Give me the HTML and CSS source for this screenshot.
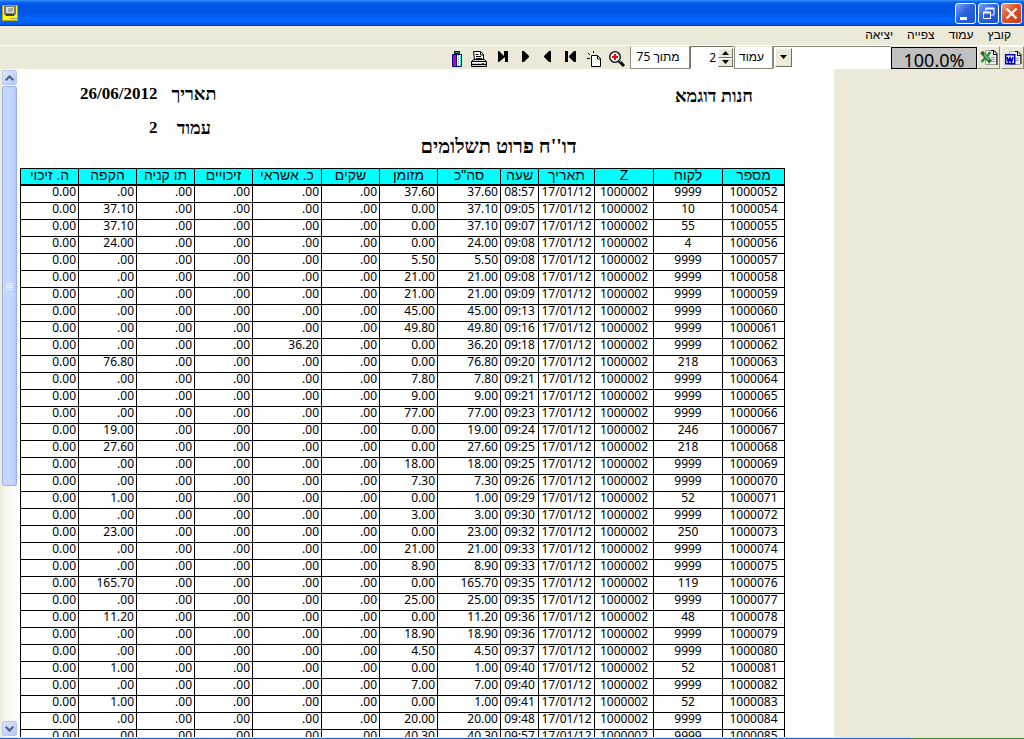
FILE: index.html
```html
<!DOCTYPE html>
<html lang="he" dir="rtl">
<head>
<meta charset="utf-8">
<title>דו''ח פרוט תשלומים</title>
<link rel="stylesheet" href="styles.css">
</head>
<body>
<div class="window">
  <header class="titlebar">
    <div class="window-buttons">
      <button class="win-btn win-close" aria-label="סגור"><svg width="19" height="19" viewBox="0 0 19 19"><path d="M4.500 4.500l10 10M14.500 4.500l-10 10" stroke="#fff" stroke-width="2.300"/></svg></button>
      <button class="win-btn" aria-label="שחזר"><svg width="19" height="19" viewBox="0 0 19 19" fill="none" stroke="#fff"><path d="M7 7V4.500h8V11h-3"/><path d="M6.500 4.500h9" stroke-width="2"/><path d="M4.500 8.500h7v6h-7z"/><path d="M4 8.500h8" stroke-width="2"/></svg></button>
      <button class="win-btn" aria-label="מזער"><svg width="19" height="19" viewBox="0 0 19 19"><path d="M4 13h7v3H4z" fill="#fff"/></svg></button>
    </div>
    <svg class="app-icon" width="16" height="16" viewBox="0 0 16 16"><path fill="#ff0" stroke="#b8a800" d="M.5.5h15v15H.5z"/><path fill="#777" d="M2 1h12v8l-2 2H4L2 9z"/><path fill="#ddd" d="M4 2h8v6H4z"/><path fill="#9bb8b0" d="M6 3h4v4H6z"/><path fill="#c96" d="M9 3h2v3H9z"/><path fill="#444" d="M4 9h8v2H4z"/><path fill="#998" d="M8 13h7v1H8z"/></svg>
  </header>
  <nav class="menubar">
    <button>קובץ</button><button>עמוד</button><button>צפייה</button><button>יציאה</button>
  </nav>
  <div class="toolbar">
    <div class="exports">
      <button class="export-btn" aria-label="Word"><svg width="18" height="18" viewBox="0 0 18 18"><path fill="#eee" stroke="#aaa" d="M5.500 2.500h8l3 3v10h-11z"/><path fill="none" stroke="#000" d="M11 2.500h3l3 3V15M13.500 3v3.500H17"/><path stroke="#999" d="M7 15.500h8M11 9.500h4M11 11.500h4"/><path fill="#fff" stroke="#0000b0" stroke-width="1.500" d="M1.700 5.700h9v9h-9z"/><path fill="none" stroke="#0000d0" stroke-width="1.800" d="M3 8l1.500 5L6 9l1.500 4L9 8"/></svg></button>
      <button class="export-btn" aria-label="Excel"><svg width="18" height="18" viewBox="0 0 18 18"><path fill="#eee" stroke="#999" d="M5.500 1.500h8l3 3v11h-11z"/><path fill="none" stroke="#000" d="M11 1.500h3l3 3V16M13.500 2v3.500H17"/><path stroke="#999" d="M7 15.500h8M11 8.500h4M11 10.500h4M11 12.500h4M9 3v12"/><path stroke="#176b20" stroke-width="3.500" d="M1.500 3l9 10"/><path stroke="#2f8a32" stroke-width="2.500" d="M10.500 3l-9 10"/><path stroke="#cfc" d="M4 5l5 6"/></svg></button>
    </div>
    <output class="zoom-value" dir="ltr">100.0%</output>
    <div class="combo" dir="ltr">
      <button class="combo-arrow" aria-label="בחר זום"><svg width="9" height="5" viewBox="0 0 9 5"><path d="M1 0h7L4.500 4z"/></svg></button>
      <input type="text" aria-label="זום">
    </div>
    <label class="field page-label" for="page-no">עמוד</label>
    <div class="spinner" dir="ltr">
      <input id="page-no" type="text" value="2">
      <div class="spin-buttons">
        <button aria-label="הבא"><svg width="7" height="4" viewBox="0 0 7 4"><path d="M0 4h7L3.500 0z"/></svg></button>
        <button aria-label="הקודם"><svg width="7" height="4" viewBox="0 0 7 4"><path d="M0 0h7L3.500 4z"/></svg></button>
      </div>
    </div>
    <span class="field total-label">מתוך 75</span>
    <div class="tools" dir="ltr">
      <button aria-label="יציאה"><svg width="14" height="18" viewBox="0 0 14 18"><path fill="#00c040" stroke="#000" d="M4.500 1.500h5v2h-5z"/><path fill="#fff" stroke="#000080" d="M2.500 4.500h9v12h-9z"/><path fill="#c000c0" d="M3 5h3v11H3z"/><path stroke="#000080" d="M6.500 4v13"/><path stroke="#0cc" stroke-dasharray="1 1" d="M8.500 5v11M10.500 6v10"/></svg></button>
      <button aria-label="הדפסה"><svg width="18" height="18" viewBox="0 0 18 18"><path fill="#fff" stroke="#000" d="M4.500 9.500l-1-8h7l3 3v5z"/><path fill="none" stroke="#000" d="M10.500 2v3h3M5.500 4.500h3M6 6.500h5M6 8.500h6"/><path fill="#ccc" stroke="#000" d="M3.500 9.500h11l2 2v5h-15v-5z"/><path stroke="#000" d="M1 11.500h15M1 14.500h15"/><path stroke="#fff" d="M2 12.500h13"/><path stroke="#e00" d="M12 13.500h2"/></svg></button>
      <button aria-label="עמוד אחרון"><svg width="12" height="14" viewBox="0 0 12 14"><path d="M1 1h1l5 5V1h4v11H8V7l-6 5H1z"/></svg></button>
      <button aria-label="עמוד הבא"><svg width="8" height="14" viewBox="0 0 8 14"><path d="M0 1h2l5 5v1l-5 5H0z"/></svg></button>
      <button aria-label="עמוד קודם"><svg width="8" height="14" viewBox="0 0 8 14"><path d="M8 1H6L1 6v1l5 5h2z"/></svg></button>
      <button aria-label="עמוד ראשון"><svg width="13" height="14" viewBox="0 0 13 14"><path d="M1 1h3v11H1zM12 1h-2L5 6v1l5 5h2z"/></svg></button>
      <button aria-label="עמוד שלם"><svg width="16" height="18" viewBox="0 0 16 18"><path fill="#fff" stroke="#000" d="M5.500 5.500h6l3 3v8h-9z"/><path fill="none" stroke="#000" d="M11.500 6v3h3M2 3l2 2M7.500 1v2M1 8.500h3" /></svg></button>
      <button aria-label="הגדלה"><svg width="18" height="18" viewBox="0 0 18 18"><circle cx="7" cy="7" r="5.300" fill="#e8f4f4" stroke="#000" stroke-width="1.300"/><path stroke="#f00" stroke-width="2" d="M4 7h6M7 4v6"/><path stroke="#000" stroke-width="3" d="M11 11l5 5"/><path stroke="#e8c000" d="M11 10l2 2"/></svg></button>
    </div>
  </div>
  <main class="viewer">
    <section class="paper">
      <div class="report-head">
        <div class="shop">חנות דוגמא</div>
        <dl class="meta">
          <dt>תאריך</dt><dd>26/06/2012</dd>
          <dt>עמוד</dt><dd>2</dd>
        </dl>
      </div>
      <h1 class="report-title">דו''ח פרוט תשלומים</h1>
      <table class="report">
        <colgroup>
          <col class="c-num"><col class="c-wide"><col class="c-z"><col class="c-date"><col class="c-time"><col class="c-total"><col class="c-std"><col class="c-std"><col class="c-wide"><col class="c-std"><col class="c-std"><col class="c-std"><col class="c-std">
        </colgroup>
        <thead>
          <tr><th>מספר</th><th>לקוח</th><th>Z</th><th>תאריך</th><th>שעה</th><th>סה"כ</th><th>מזומן</th><th>שקים</th><th>כ. אשראי</th><th>זיכויים</th><th>תו קניה</th><th>הקפה</th><th>ה. זיכוי</th></tr>
        </thead>
        <tbody id="rows"></tbody>
      </table>
    </section>
    <div class="scrollbar" aria-hidden="true">
      <div class="scroll-btn"><svg width="9" height="6" viewBox="0 0 9 6"><path fill="none" stroke="#4d6185" stroke-width="2" d="M.7 5.300L4.500 1.500l3.800 3.800"/></svg></div>
      <div class="track"><div class="thumb"><i></i><i></i><i></i><i></i></div></div>
      <div class="scroll-btn"><svg width="9" height="6" viewBox="0 0 9 6"><path fill="none" stroke="#4d6185" stroke-width="2" d="M.7.7l3.800 3.800L8.300.7"/></svg></div>
    </div>
  </main>
  <footer class="edge"></footer>
</div>
<script src="report.js"></script>
</body>
</html>
```
FILE: styles.css
```css
* { box-sizing: border-box; }
body {
  margin: 0;
  background: #ece9d8;
  color: #000;
  font: 12px/16px "Noto Sans", "Liberation Sans", sans-serif;
}
button { margin: 0; padding: 0; border: 0; background: none; font: inherit; color: inherit; }
svg { display: block; }
.window { display: flex; flex-direction: column; height: 100vh; overflow: hidden; }

.titlebar {
  display: flex;
  flex: none;
  align-items: center;
  justify-content: space-between;
  height: 26px;
  padding: 0 2px;
  background: linear-gradient(#3d95ff 0, #0a66f0 2px, #0054e3 5px, #0055e5 13px, #0066ff 19px, #0066ff 22px, #003dd0 26px);
}
.window-buttons { display: flex; gap: 2px; }
.win-btn {
  width: 21px;
  height: 21px;
  border: 1px solid #fff;
  border-radius: 3px;
  background: linear-gradient(135deg, #7ba2f5, #2a62e0 45%, #1c50d0);
}
.win-close { background: linear-gradient(135deg, #f0a080, #e0502a 45%, #c83c14); }

.menubar {
  display: flex;
  flex: none;
  gap: 14px;
  height: 20px;
  padding: 0 13px;
  border-bottom: 1px solid #fff;
  font: 12px/17px "Liberation Sans", sans-serif;
}

.toolbar { display: flex; flex: none; height: 23px; align-items: stretch; }
.exports { display: flex; gap: 1px; }
.export-btn {
  display: flex;
  align-items: center;
  justify-content: center;
  width: 23px;
  border: 1px solid;
  border-color: #fff #8d8a7c #8d8a7c #fff;
}
.zoom-value {
  width: 86px;
  margin: 1px 0 0;
  border: 1px solid #000;
  background: #c0c0c0;
  font-size: 18px;
  line-height: 24px;
  text-align: center;
}
.combo {
  display: flex;
  width: 118px;
  padding: 1px;
  border: 1px solid;
  border-color: #8d8a7c #fff #fff #8d8a7c;
  background: #fff;
}
.combo input { flex: 1; min-width: 0; padding: 0; border: 0; background: none; }
.combo-arrow, .spin-buttons button {
  display: flex;
  align-items: center;
  justify-content: center;
  background: #ece9d8;
  border: 1px solid;
  border-color: #fff #716f64 #716f64 #fff;
}
.combo-arrow { width: 17px; }
.field {
  border: 1px solid;
  border-color: #ece9d8 #8d8a7c #8d8a7c;
  background: #fff;
  line-height: 20px;
  text-align: center;
}
.page-label { width: 39px; padding-right: 4px; }
.spinner {
  display: flex;
  width: 44px;
  border: 1px solid;
  border-color: #716f64 #fff #fff #716f64;
  background: #fff;
}
.spinner input {
  flex: 1;
  min-width: 0;
  padding: 0 2px 0;
  border: 0;
  background: none;
  font: inherit;
  text-align: right;
}
.spin-buttons { display: flex; flex-direction: column; width: 15px; padding: 1px 0; }
.spin-buttons button { flex: 1; }
.total-label { width: 60px; padding-right: 4px; }
.tools { display: flex; gap: 13px; align-items: flex-start; padding: 4px 4px 0; }
.tools button:nth-child(1) { margin-right: -7px; }
.tools button:nth-child(2) { margin-right: -4px; }
.tools button:nth-child(7) { margin-left: -4px; margin-right: -7px; }

.viewer { display: flex; flex: 1; min-height: 0; justify-content: flex-end; overflow: hidden; }
.paper { width: 816px; padding: 15px 49px 0 2px; background: #fff; overflow: hidden; }
.report-head {
  display: flex;
  justify-content: space-between;
  height: 51px;
  padding: 0 32px 0 60px;
  font: bold 18px/20px "Liberation Serif", serif;
}
.shop { padding-top: 2px; }
.meta { display: grid; grid-template-columns: auto auto; gap: 14px; margin: 0; }
.meta dt { text-align: center; }
.meta dd { margin: 0; direction: ltr; font-size: 17px; text-align: right; }
.report-title {
  margin: 0;
  padding: 0 0 11px 192px;
  font: bold 20px/22px "Liberation Serif", serif;
  text-align: center;
  direction: rtl;
  padding-left: 192px;
}

.report { width: 100%; border-collapse: collapse; table-layout: fixed; }
.report th {
  height: 16px;
  padding: 0 0 1px;
  border: 1px solid #000;
  border-bottom-width: 2px;
  background: #0ff;
  font: 14px/13px "Liberation Sans", sans-serif;
  text-align: center;
  white-space: nowrap;
}
.report td {
  height: 17px;
  padding: 0 2px 4px;
  border: 1px solid #000;
  direction: ltr;
  line-height: 12px;
  text-align: right;
  white-space: nowrap;
}
.report td:nth-child(-n+5) { padding-left: 0; padding-right: 0; text-align: center; }
.c-num { width: 62px; }
.c-wide { width: 69px; }
.c-z { width: 59px; }
.c-date { width: 56px; }
.c-time { width: 38px; }
.c-total { width: 63px; }
.c-std { width: 58px; }

.scrollbar {
  display: flex;
  flex: none;
  flex-direction: column;
  width: 18px;
  padding: 1px 1px 1px 2px;
  background: linear-gradient(90deg, #ece9d8, #f6f5ee 4px, #fefefb);
}
.scroll-btn {
  display: flex;
  flex: none;
  align-items: center;
  justify-content: center;
  height: 15px;
  border: 1px solid #b4c8f6;
  border-radius: 2px;
  background: linear-gradient(135deg, #dce6fe, #b4c8f6);
}
.track { flex: 1; padding-top: 1px; }
.thumb {
  display: flex;
  flex-direction: column;
  gap: 1px;
  align-items: center;
  justify-content: center;
  height: 63%;
  border: 1px solid #98b0e8;
  border-radius: 2px;
  background: linear-gradient(90deg, #cad8fd, #c4d4fd 70%, #b4c8f6);
}
.thumb i { width: 7px; height: 1px; background: #eef4fe; }
.edge { flex: none; height: 2px; border-top: 1px solid #ece9d8; background: linear-gradient(90deg, #245edb 89%, #388e2e 89%); }
```
FILE: report.js
```js
// number, customer, time, total, payment kind (m: cash, h: on account, a: credit card)
const payments = `
52 9999 08:57 37.60 m
54 10 09:05 37.10 h
55 55 09:07 37.10 h
56 4 09:08 24.00 h
57 9999 09:08 5.50 m
58 9999 09:08 21.00 m
59 9999 09:09 21.00 m
60 9999 09:13 45.00 m
61 9999 09:16 49.80 m
62 9999 09:18 36.20 a
63 218 09:20 76.80 h
64 9999 09:21 7.80 m
65 9999 09:21 9.00 m
66 9999 09:23 77.00 m
67 246 09:24 19.00 h
68 218 09:25 27.60 h
69 9999 09:25 18.00 m
70 9999 09:26 7.30 m
71 52 09:29 1.00 h
72 9999 09:30 3.00 m
73 250 09:32 23.00 h
74 9999 09:33 21.00 m
75 9999 09:33 8.90 m
76 119 09:35 165.70 h
77 9999 09:35 25.00 m
78 48 09:36 11.20 h
79 9999 09:36 18.90 m
80 9999 09:37 4.50 m
81 52 09:40 1.00 h
82 9999 09:40 7.00 m
83 52 09:41 1.00 h
84 9999 09:48 20.00 m
85 9999 09:57 40.30 m`.trim().split("\n");

const body = document.getElementById("rows");
for (const line of payments) {
  const [id, customer, time, total, kind] = line.split(" ");
  const row = body.insertRow();
  const cells = [
    "10000" + id, customer, "1000002", "17/01/12", time, total,
    kind === "m" ? total : "0.00",
    ".00",
    kind === "a" ? total : ".00",
    ".00", ".00",
    kind === "h" ? total : ".00",
    "0.00"
  ];
  for (const text of cells) row.insertCell().textContent = text;
}
```
